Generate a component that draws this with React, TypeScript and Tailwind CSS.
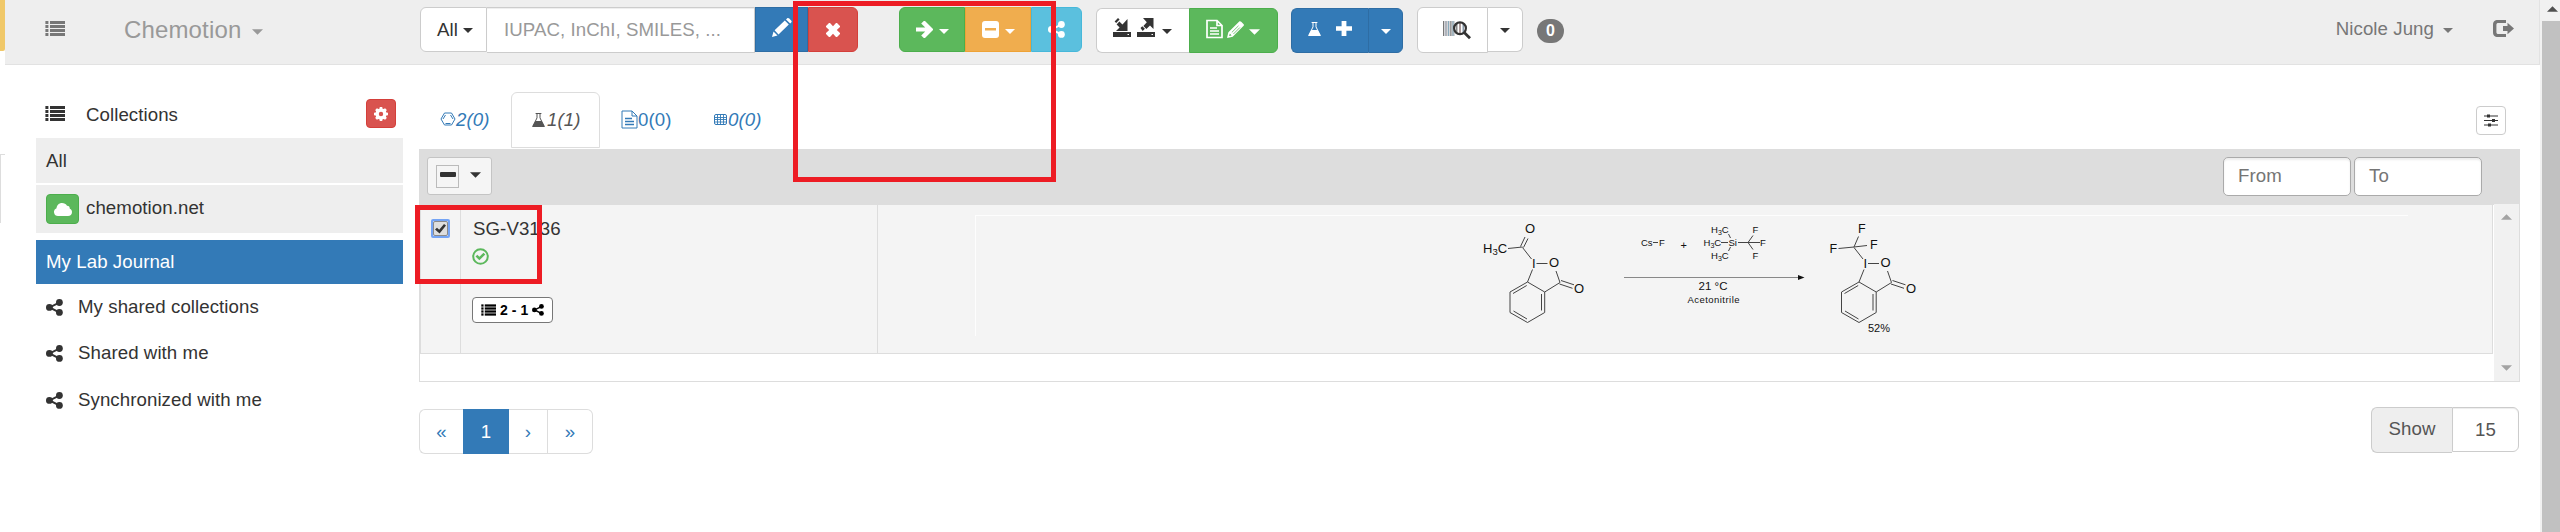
import React from "react";

type IconProps = { w: number; h: number; className?: string; children: React.ReactNode; box?: string };

function Icon({ w, h, className = "", children, box }: IconProps) {
  return (
    <svg width={w} height={h} viewBox={box ?? `0 0 ${w} ${h}`} fill="currentColor" className={`block shrink-0 ${className}`} aria-hidden="true">
      {children}
    </svg>
  );
}

function ListIcon({ w = 20, h = 15, className = "" }: { w?: number; h?: number; className?: string }) {
  return (
    <Icon w={w} h={h} box="0 0 20 15" className={className}>
      {[0, 4, 8, 12].map((y) => (
        <g key={y}>
          <rect x="0.4" y={y} width="3" height="3" />
          <rect x="5" y={y} width="15" height="3" />
        </g>
      ))}
    </Icon>
  );
}

function ShareIcon({ size = 17, className = "" }: { size?: number; className?: string }) {
  return (
    <Icon w={size} h={size} box="0 0 17 17" className={className}>
      <path d="M13.2 3.6 3.6 8.4l9.6 5" fill="none" stroke="currentColor" strokeWidth="2" />
      <circle cx="3.4" cy="8.4" r="3.4" />
      <circle cx="13.4" cy="3.5" r="3.4" />
      <circle cx="13.4" cy="13.4" r="3.4" />
    </Icon>
  );
}

function Caret({ w = 10, h = 5, className = "" }: { w?: number; h?: number; className?: string }) {
  return (
    <Icon w={w} h={h} box="0 0 10 5" className={className}>
      <path d="M0 0h10L5 5z" />
    </Icon>
  );
}

function Flask({ w = 13, h = 14, className = "" }: { w?: number; h?: number; className?: string }) {
  return (
    <Icon w={w} h={h} box="0 0 13 14" className={className}>
      <path d="M3.6 0.5h5.8M5 0.5v4.4L1 13h11L8 4.900V0.500" fill="none" stroke="currentColor" strokeWidth="1" />
      <path d="M3.300 8h6.400L13 14H0z" />
    </Icon>
  );
}

function DocIcon({ w = 17, h = 19, className = "", thick = 1 }: { w?: number; h?: number; className?: string; thick?: number }) {
  return (
    <Icon w={w} h={h} box="0 0 17 19" className={className}>
      <path d="M1 1h10l5 5v12H1zM11 1v5h5" fill="none" stroke="currentColor" strokeWidth={thick} />
      <path d="M4 8.500h7M4 11.500h9M4 14.500h9" stroke="currentColor" strokeWidth="1.300" />
    </Icon>
  );
}

function Navbar() {
  return (
    <header className="flex h-[65px] w-[2535px] items-start border-r border-b border-[#e2e2e2] bg-[#eeeeee]">
      <div className="flex w-[415px] shrink-0 text-[#777]">
        <ListIcon className="mt-[21px] ml-[40px]" />
        <div className="ml-[59px] w-[128px] pt-[14px] text-[24px] leading-[32px] tracking-[0.15px] text-[#999]">Chemotion</div>
        <Caret w={11} h={6} className="mt-[29px] text-[#999]" />
      </div>
      <div className="mt-[7px] flex shrink-0">
        <button className="flex h-[45px] w-[67px] items-center rounded-l-[6px] border border-[#ccc] bg-white pl-[16px]">
          All
          <Caret className="mt-[2px] ml-[5px]" />
        </button>
        <div className="flex h-[46px] w-[268px] items-center border border-l-0 border-[#ccc] bg-white pb-[1px] pl-[17px] text-[#999] shadow-[inset_0_1px_1px_rgba(0,0,0,0.075)]">
          <span>IUPAC, InChI, SMILES, ...</span>
        </div>
        <button className="flex h-[45px] w-[53px] justify-center border border-[#2e6da4] bg-[#337ab7] pt-[10px] text-white">
          <Icon w={20} h={19}>
            <path d="M0 19l1.500-5.500 4 4zM2.600 12.300 12.800 2.400l4 4L6.500 16.400zM14 1.400l1-1c.7-.6 1.600-.5 2.300.2l1.800 1.800c.7.7.8 1.500.1 2.200l-1 1z" />
          </Icon>
        </button>
        <button className="flex h-[45px] w-[50px] items-center justify-center rounded-r-[6px] border border-[#d43f3a] bg-[#d9534f] text-white">
          <Icon w={14} h={14}>
            <path d="M3 0h1l3 3.200L10 0h1l3 3v1l-3.200 3L14 10v1l-3 3h-1l-3-3.200L4 14H3l-3-3v-1l3.200-3L0 4V3z" />
          </Icon>
        </button>
      </div>
      <div className="mt-[7px] ml-[41px] flex shrink-0 text-white">
        <button className="flex h-[45px] w-[66px] items-center rounded-l-[6px] border border-[#4cae4c] bg-[#5cb85c] pl-[16px]">
          <Icon w={17} h={17}>
            <path d="M0 6.500h9.200L5.200 2.600 7.800 0H9l8 8v1l-8 8H7.800l-2.600-2.600 4-3.900H0z" />
          </Icon>
          <Caret className="mt-[3px] ml-[6px]" />
        </button>
        <button className="flex h-[45px] w-[66px] items-center border border-[#eea236] bg-[#f0ad4e] pl-[16px]">
          <Icon w={17} h={17}>
            <rect width="17" height="17" rx="3" />
            <rect x="3" y="7" width="11" height="2.500" fill="#f0ad4e" />
          </Icon>
          <Caret className="mt-[3px] ml-[6px]" />
        </button>
        <button className="flex h-[45px] w-[51px] items-center justify-center rounded-r-[6px] border border-[#46b8da] bg-[#5bc0de]">
          <ShareIcon />
        </button>
      </div>
      <div className="mt-[8px] ml-[14px] flex shrink-0 text-white">
        <button className="flex h-[45px] w-[93px] items-start rounded-l-[6px] border border-r-0 border-[#ccc] bg-white pt-[9px] pl-[16px] text-[#333]">
          <Icon w={18} h={19}>
            <rect y="14" width="18" height="5" />
            <rect x="14.500" y="16" width="1.500" height="1" fill="#fff" />
            <path d="M14.500 1v12H3l3.600-3.600-3-3 2.800-2.800 3 3 1-1zM1.600 3.500 5 0l1.600 1.600-3.400 3.300z" />
          </Icon>
          <Icon w={18} h={19} className="ml-[6px]">
            <rect y="14" width="18" height="5" />
            <rect x="14.500" y="16" width="1.500" height="1" fill="#fff" />
            <path d="M6 0h10.500v11L13 7.500l-3.600 3.600-3-3L9.800 4.200zM5.300 8.200l2.600 2.600L5.700 13 3.500 10z" />
          </Icon>
          <Caret className="mt-[11px] ml-[7px]" />
        </button>
        <button className="flex h-[45px] w-[89px] items-start rounded-r-[6px] border border-[#4cae4c] bg-[#5cb85c] pt-[10px] pl-[16px]">
          <DocIcon w={17} h={20} thick={1.7} />
          <Icon w={17} h={17} className="mt-[2px] ml-[4px]">
            <path d="M0 17l1.400-5.700L12 .7c.8-.8 1.500-.6 2.200 0l2.200 2.200c.8.8.7 1.500 0 2.200L5.700 15.700zM2.900 12.600l-.8 2.400 2.500-.6z" fillRule="evenodd" />
            <path d="M4.800 11.400 11.500 4.800M6.400 13l6.500-6.500" stroke="#5cb85c" strokeWidth="0.800" />
          </Icon>
          <Caret w={11} h={6} className="mt-[10px] ml-[5px]" />
        </button>
      </div>
      <div className="mt-[8px] ml-[13px] flex shrink-0 text-white">
        <button className="flex h-[45px] w-[77px] items-start rounded-l-[6px] border border-r-0 border-[#2e6da4] bg-[#337ab7] pt-[13px] pl-[16px]">
          <Flask />
          <Icon w={16} h={15} className="mt-[-1px] ml-[15px]">
            <path d="M5.600 0h4.800v5.200H16v4.600h-5.600V15H5.600V9.800H0V5.200h5.600z" />
          </Icon>
        </button>
        <button className="flex h-[45px] w-[35px] items-center justify-center rounded-r-[6px] border border-[#2e6da4] bg-[#337ab7]">
          <Caret className="mt-[2px]" />
        </button>
      </div>
      <div className="mt-[7px] ml-[14px] flex shrink-0">
        <button className="flex h-[46px] w-[71px] items-start rounded-l-[6px] border border-[#ccc] bg-white pt-[13px] pl-[25px]">
          <Icon w={28} h={19}>
            <rect x="0" y="0" width="1" height="15" fill="#777" />
            <rect x="1" y="0" width="11" height="15" fill="#d5d5d8" />
            <rect x="2" y="0" width="2" height="15" fill="#b0b4bc" />
            <rect x="5" y="0" width="1" height="15" fill="#8ab" />
            <rect x="7" y="0" width="1.500" height="15" fill="#999" />
            <rect x="9.500" y="0" width="1" height="15" fill="#79a" />
            <rect x="13" y="2" width="1.500" height="11" fill="#888" />
            <rect x="16" y="2" width="2" height="11" fill="#a99" />
            <rect x="19.500" y="2" width="1.500" height="11" fill="#89a" />
            <circle cx="17" cy="7.300" r="5.900" fill="none" stroke="#333" strokeWidth="2.200" />
            <path d="M21.200 11.500 27 17.300" stroke="#333" strokeWidth="2.800" />
          </Icon>
        </button>
        <button className="flex h-[45px] w-[35px] items-center justify-center rounded-r-[6px] border border-l-0 border-[#ccc] bg-white">
          <Caret className="mt-[2px]" />
        </button>
      </div>
      <span className="mt-[19px] ml-[14px] flex h-[24px] w-[27px] shrink-0 items-center justify-center rounded-full bg-[#777] text-[16px] font-bold text-white">0</span>
      <div className="ml-auto flex text-[#777]">
        <span className="mt-[15px] leading-[28px]">Nicole Jung</span>
        <Caret className="mt-[28px] ml-[9px]" />
        <Icon w={21} h={17} className="mt-[20px] mr-[25px] ml-[40px]">
          <path d="M13 0v3H5.500C4 3 3.400 3.600 3.400 5v7c0 1.400.6 2 2.100 2H13v3H5c-3.500 0-5-1.500-5-5V5c0-3.500 1.500-5 5-5z" />
          <path d="M10 6h4.500V2.800L21 8.500l-6.500 5.700V11H10z" />
        </Icon>
      </div>
    </header>
  );
}

function SharedRow({ label, height }: { label: string; height: string }) {
  return (
    <li className={`flex items-center pl-[10px] ${height}`}>
      <ShareIcon />
      <span className="ml-[15px]">{label}</span>
    </li>
  );
}

function Sidebar() {
  return (
    <nav className="ml-[31px] w-[367px] shrink-0 pt-[34px]">
      <div className="flex h-[39px] items-start pl-[9px]">
        <ListIcon className="mt-[7px]" />
        <span className="ml-[21px] leading-[32px]">Collections</span>
        <button className="mr-[7px] ml-auto flex h-[29px] w-[30px] items-center justify-center rounded-[4px] border border-[#d43f3a] bg-[#d9534f]">
          <Icon w={14} h={14} className="text-white">
            <path d="M5.800 0h2.400l.4 1.700 1 .4 1.500-.9 1.700 1.700-.9 1.500.4 1 1.700.4v2.400l-1.700.4-.4 1 .9 1.500-1.700 1.700-1.500-.9-1 .4-.4 1.700H5.800l-.4-1.700-1-.4-1.500.9-1.700-1.700.9-1.500-.4-1L0 8.200V5.800l1.700-.4.4-1-.9-1.500 1.700-1.700 1.500.9 1-.4zM7 4.800a2.200 2.200 0 1 0 0 4.400 2.200 2.200 0 0 0 0-4.400z" fillRule="evenodd" />
          </Icon>
        </button>
      </div>
      <div className="flex h-[45px] items-center bg-[#eee] pl-[10px]">All</div>
      <div className="mt-[2px] flex h-[48px] items-start bg-[#eee] pl-[10px]">
        <span className="mt-[9px] flex h-[30px] w-[33px] items-center justify-center rounded-[4px] border border-[#4cae4c] bg-[#5cb85c] text-white">
          <Icon w={18} h={13}>
            <path d="M4 13a4 4 0 0 1-1.500-7.700C2.800 2.200 5 0 8 0c2.200 0 4 1 5 2.800 2 0 2.800 1.200 2.800 3C17.300 6.400 18 7.600 18 9c0 2.400-1.600 4-4 4z" />
          </Icon>
        </span>
        <span className="mt-[9px] ml-[7px] leading-[28px]">chemotion.net</span>
      </div>
      <div className="mt-[7px] flex h-[44px] items-center bg-[#337ab7] pl-[10px] text-white">My Lab Journal</div>
      <ul>
        <SharedRow label="My shared collections" height="h-[46px]" />
        <SharedRow label="Shared with me" height="h-[46px]" />
        <SharedRow label="Synchronized with me" height="h-[48px]" />
      </ul>
    </nav>
  );
}

function Tabs() {
  return (
    <div className="flex h-[57px] text-[#337ab7]">
      <div className="flex h-[56px] w-[92px] items-center pl-[21px] italic">
        <Icon w={16} h={14} className="mt-[-3px]">
          <path d="M4.500 1h7L15 7l-3.500 6h-7L1 7zM5.500 3 3 7M5.500 11.500h5M10.500 3 13 7" fill="none" stroke="currentColor" strokeWidth="1" />
        </Icon>
        <span>2(0)</span>
      </div>
      <div className="flex h-[56px] w-[89px] items-center rounded-t-[6px] border border-[#ddd] bg-white pl-[20px] text-[#555] italic">
        <Flask />
        <span className="ml-[2px]">1(1)</span>
      </div>
      <div className="flex h-[56px] w-[92px] items-center pl-[21px]">
        <DocIcon className="mt-[-2px]" />
        <span>0(0)</span>
      </div>
      <div className="flex h-[56px] items-center pl-[22px] italic">
        <Icon w={13} h={11} className="mt-[-2px]">
          <rect x="0.500" y="0.500" width="12" height="10" rx="1.500" fill="none" stroke="currentColor" />
          <path d="M0 3.500h13M0 5.500h13M0 8h13M3.500 0v11M6.500 0v11M9.500 0v11" stroke="currentColor" strokeWidth="0.900" />
        </Icon>
        <span className="ml-[1px]">0(0)</span>
      </div>
      <button className="mt-[14px] mr-[14px] ml-auto flex h-[29px] w-[30px] items-center justify-center rounded-[4px] border border-[#ccc] bg-white">
        <Icon w={14} h={13} className="text-[#333]">
          <path d="M0 2h14M0 6.500h14M0 11h14" stroke="currentColor" strokeWidth="1" />
          <rect x="3" y="0.500" width="3" height="3" />
          <rect x="8" y="5" width="3" height="3" />
          <rect x="4" y="9.500" width="3" height="3" />
        </Icon>
      </button>
    </div>
  );
}

function Iodolane() {
  return (
    <g fill="none">
      <path d="M62.500 47.500 71.500 59M76.500 63.500h11M72.500 69.500 67.500 82M96 71l4 11.500M100 82.500 84.700 92M99.500 84l13 4.300M101 80.500l13 4.300" />
      <path d="M67.500 82 84.700 92v20.500L67.500 122.500 50 112.500V92zM66.700 85.500 53 93.500M81.500 94v16.500M67 119 53.500 111" />
    </g>
  );
}

function Reaction() {
  return (
    <svg width="480" height="147" viewBox="0 2 480 147" className="block tracking-normal" stroke="#444" strokeWidth="1" fontFamily="'Liberation Sans', Arial, sans-serif">
      <Iodolane />
      <path d="M48 48.500 62.500 47M60.500 46.500 65 37M63.500 47.500 68 38.500" fill="none" />
      <g transform="translate(331.500 0)">
        <Iodolane />
        <path d="M47 48.500 62.500 47l13-1.500M62.500 47l4.500-10.500" fill="none" />
      </g>
      <path d="M193 42.500h5M261 42.500h7M278 42.500h22M288 42.500l5-7M288 42.500l5 7M268.500 34l2 4M270.500 47l-2 4" fill="none" />
      <path d="M164 77.500h174" stroke="#888" />
      <path d="M338 75l6.500 2.500L338 80z" fill="#111" stroke="none" />
      <g fill="#111" stroke="none" fontSize="13">
        <text x="23" y="53">H<tspan fontSize="9.500" dy="2">3</tspan><tspan dy="-2">C</tspan></text>
        <text x="65" y="33">O</text>
        <text x="72" y="67.500">I</text>
        <text x="89" y="67">O</text>
        <text x="114" y="93">O</text>
        <text x="403.500" y="67.500">I</text>
        <text x="420.500" y="67">O</text>
        <text x="446" y="93">O</text>
      </g>
      <g fill="#111" stroke="none" fontSize="12.500">
        <text x="398" y="33">F</text>
        <text x="369.500" y="53">F</text>
        <text x="410" y="49">F</text>
      </g>
      <g fill="#111" stroke="none" fontSize="9.500">
        <text x="181" y="46">Cs</text>
        <text x="199" y="46">F</text>
        <text x="220.500" y="49" fontSize="11">+</text>
        <text x="251" y="33">H<tspan fontSize="7" dy="1.500">3</tspan><tspan dy="-1.500">C</tspan></text>
        <text x="243.500" y="46">H<tspan fontSize="7" dy="1.500">3</tspan><tspan dy="-1.500">C</tspan></text>
        <text x="251" y="59">H<tspan fontSize="7" dy="1.500">3</tspan><tspan dy="-1.500">C</tspan></text>
        <text x="268.500" y="46">Si</text>
        <text x="292.500" y="33">F</text>
        <text x="300" y="46">F</text>
        <text x="292.500" y="59">F</text>
        <text x="238.500" y="90" fontSize="11.500" textLength="29">21 °C</text>
        <text x="227.500" y="103" textLength="52">Acetonitrile</text>
        <text x="408" y="132" fontSize="11" textLength="22">52%</text>
      </g>
    </svg>
  );
}

function ReactionTable() {
  return (
    <section className="h-[233px] w-[2101px]">
      <div className="flex h-[56px] items-start bg-[#ddd] pt-[8px] pl-[8px]">
        <button className="flex h-[38px] w-[65px] items-center rounded-[3px] border border-[#c4c4c4] bg-[#f5f5f5] pl-[8px]">
          <span className="flex h-[23px] w-[23px] justify-center border border-[#bbb] pt-[6px]">
            <span className="h-[5px] w-[16px] rounded-[1px] bg-[#333]" />
          </span>
          <Caret w={11} h={6} className="mt-[-3px] ml-[11px]" />
        </button>
        <div className="mr-[3px] ml-auto flex h-[39px] w-[128px] items-center rounded-[5px] border border-[#aaa] bg-white pb-[2px] pl-[14px] text-[#757575] shadow-[inset_0_2px_2px_rgba(0,0,0,0.075)]">From</div>
        <div className="mr-[38px] flex h-[39px] w-[128px] items-center rounded-[5px] border border-[#aaa] bg-white pb-[2px] pl-[14px] text-[#757575] shadow-[inset_0_2px_2px_rgba(0,0,0,0.075)]">To</div>
      </div>
      <div className="flex h-[177px] border-x border-b border-[#ddd]">
        <div className="flex h-[149px] w-[2073px] border-r border-b border-l border-[#ddd] bg-[#f4f4f4]">
          <div className="w-[40px] shrink-0 border-r border-[#ddd] pt-[14px] pl-[10px]">
            <div className="flex h-[19px] w-[19px] items-center justify-center rounded-[2px] border-2 border-[#74a4f5] bg-[#c5d4ee]">
              <div className="flex h-[15px] w-[15px] items-center justify-center rounded-[2px] border border-[#8a8a8a] bg-[#dedede]">
                <Icon w={11} h={10} className="text-[#333]">
                  <path d="M0 5.500 2 3.700l2.200 2L9 0l2 1.500L4.600 9.500z" />
                </Icon>
              </div>
            </div>
          </div>
          <div className="w-[417px] shrink-0 border-r border-[#ddd] pl-[11px]">
            <div className="mt-[10px] ml-[1px] h-[27px] leading-[28px]">SG-V3136</div>
            <Icon w={17} h={17} className="mt-[6px] text-[#5cb85c]">
              <circle cx="8.500" cy="8.500" r="7.300" fill="none" stroke="currentColor" strokeWidth="2" />
              <path d="M3.500 8.500 5.300 6.700 7.400 8.700 11.500 4.800l1.800 1.800-5.900 5.700z" />
            </Icon>
            <div className="mt-[32px] flex h-[26px] w-[81px] items-center rounded-[4px] border border-[#777] bg-white pl-[8px] text-[14px] font-bold text-black">
              <ListIcon w={15} h={12} />
              <span className="ml-[4px] w-[28px] whitespace-nowrap">2 - 1</span>
              <ShareIcon size={12} className="ml-[4px]" />
            </div>
          </div>
          <div className="flex w-[1614px]">
            <div className="mt-[10px] ml-[97px] h-[121px] w-[1px] bg-[#fdfdfd]" />
            <div className="mt-[10px] h-[137px] w-[1432px] border-t border-[#fdfdfd]">
              <div className="mt-[-14px] ml-[484px]">
                <Reaction />
              </div>
            </div>
          </div>
        </div>
        <div className="mt-[-1px] ml-auto flex w-[25px] flex-col items-center justify-between bg-[#f1f1f1] pt-[10px] pb-[10px] text-[#a3a3a3]">
          <Caret w={11} h={6} className="rotate-180" />
          <Caret w={11} h={6} />
        </div>
      </div>
    </section>
  );
}

function Footer() {
  return (
    <footer className="mt-[25px] flex w-[2101px] items-start">
      <div className="mt-[2px] flex h-[45px] text-[#337ab7]">
        <a className="flex w-[44px] items-center justify-center rounded-l-[6px] border border-r-0 border-[#ddd]">«</a>
        <a className="flex w-[46px] items-center justify-center bg-[#337ab7] text-white">1</a>
        <a className="flex w-[39px] items-center justify-center border border-l-0 border-[#ddd]">›</a>
        <a className="flex w-[45px] items-center justify-center rounded-r-[6px] border border-l-0 border-[#ddd]">»</a>
      </div>
      <div className="mr-[1px] ml-auto flex text-[#555]">
        <span className="flex h-[46px] w-[81px] items-center justify-center rounded-l-[6px] border border-r-0 border-[#ccc] bg-[#eee] pb-[3px]">Show</span>
        <span className="flex h-[45px] w-[67px] items-center justify-center rounded-r-[6px] border border-[#ccc] bg-white shadow-[inset_0_1px_1px_rgba(0,0,0,0.075)]">15</span>
      </div>
    </footer>
  );
}

export default function App() {
  return (
    <div className="relative flex h-[532px] w-[2560px] overflow-hidden bg-white font-['Liberation_Sans',Arial,sans-serif] text-[18.67px] leading-[26px] tracking-[0.07px] text-[#333]">
      <div className="w-[5px] shrink-0">
        <div className="h-[51px] rounded-br-[2px] bg-[#f0c869]" />
        <div className="mt-[103px] h-[69px] border-t border-l border-[#ddd]" />
      </div>
      <main className="w-[2535px] shrink-0">
        <Navbar />
        <div className="flex">
          <Sidebar />
          <div className="ml-[16px] w-[2101px] shrink-0 pt-[27px]">
            <Tabs />
            <ReactionTable />
            <Footer />
          </div>
        </div>
      </main>
      <div className="flex w-[20px] shrink-0 flex-col items-end bg-[#f1f1f1]">
        <Caret w={11} h={6} className="mt-[6px] mr-[2px] rotate-180 text-[#505050]" />
        <div className="mt-[9px] w-[18px] flex-1 bg-[#c1c1c1]" />
      </div>
      <div className="absolute top-[1px] left-[793px] h-[181px] w-[263px] border-[5px] border-[#ed1c24]" />
      <div className="absolute top-[205px] left-[415px] h-[79px] w-[127px] border-[5px] border-[#ed1c24]" />
    </div>
  );
}
